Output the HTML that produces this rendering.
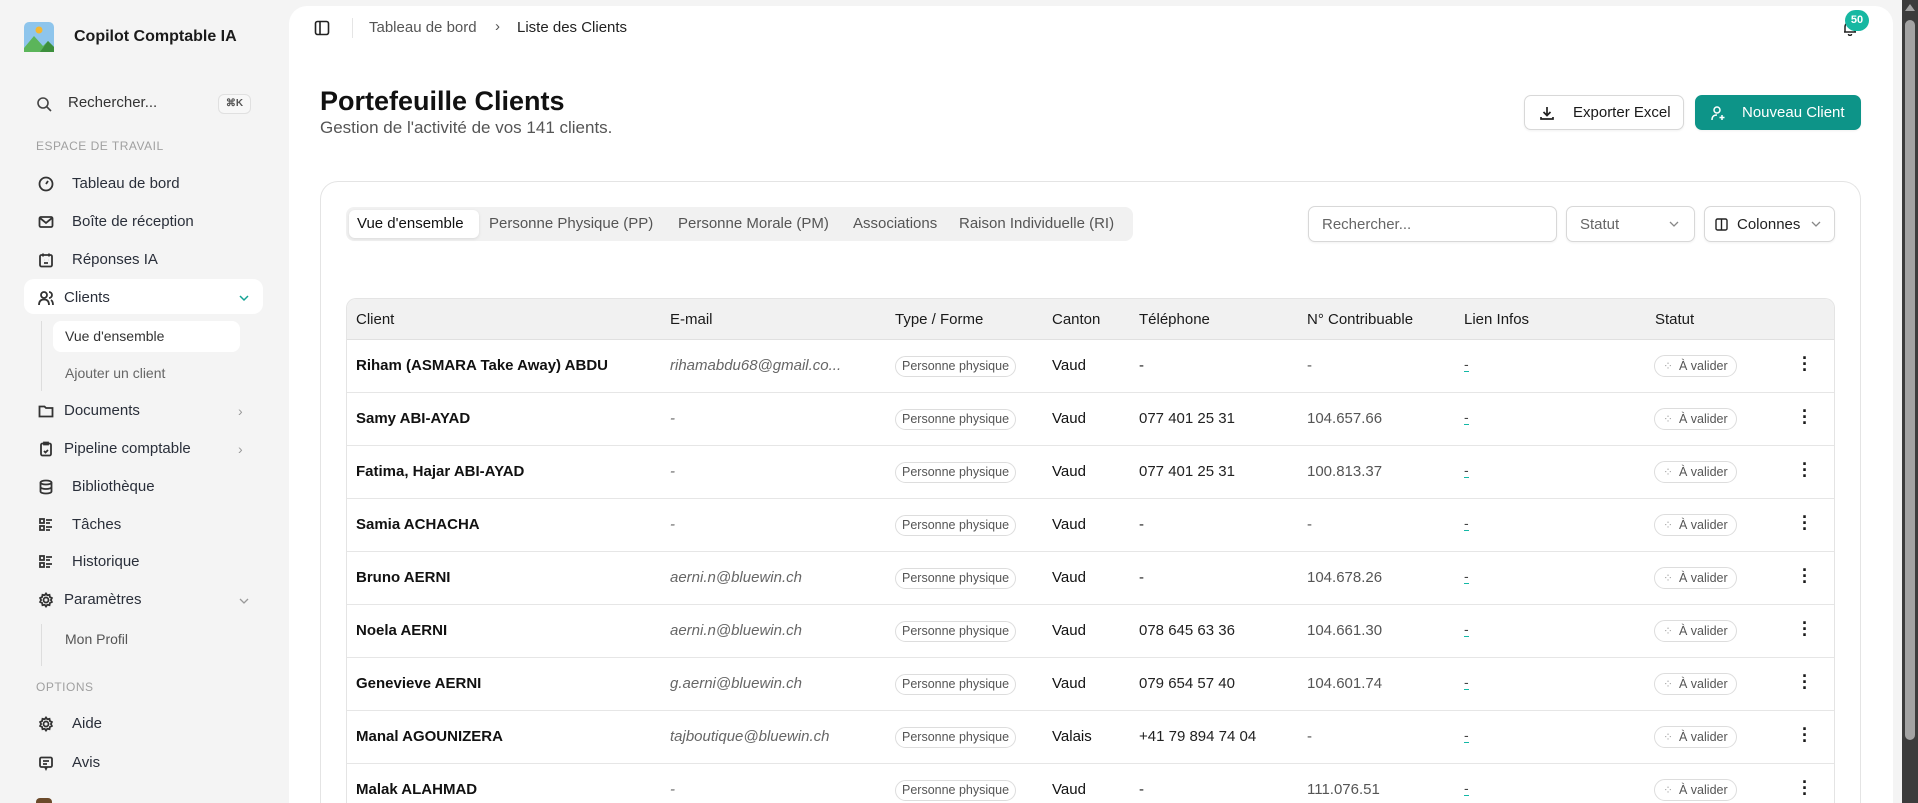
<!DOCTYPE html>
<html style="width:1918px;height:803px;overflow:hidden"><head><meta charset="utf-8"><style>
*{box-sizing:border-box;margin:0;padding:0}
body{width:1918px;height:803px;overflow:hidden;background:#f4f4f4;font-family:"Liberation Sans",sans-serif;color:#1a1a1a;position:relative}
#wrap{position:absolute;left:0;top:0;width:1918px;height:803px;overflow:hidden}
.a{position:absolute;white-space:nowrap}
.nav{position:absolute;left:38px;font-size:15px;color:#2a2f3a;display:flex;align-items:center}
.nav svg{width:16px;height:16px;margin-right:10px;stroke:#333;fill:none;stroke-width:1.8}
.nav.i svg{margin-right:18px}
.sec{position:absolute;left:36px;font-size:12px;letter-spacing:.5px;color:#a0a0a0}
.main{position:absolute;left:289px;top:6px;width:1604px;height:797px;background:#fff;border-radius:18px 18px 0 0}
.card{position:absolute;left:320px;top:181px;width:1541px;height:622px;border:1px solid #e4e4e4;border-bottom:none;border-radius:18px 18px 0 0;background:#fff}
.btn{position:absolute;border:1px solid #d8d8d8;border-radius:7px;background:#fff;font-size:15px;display:flex;align-items:center;box-shadow:0 1px 2px rgba(0,0,0,.06)}
.tbl{position:absolute;left:346px;top:298px;width:1489px;height:505px;border:1px solid #e4e4e4;border-bottom:none;border-radius:10px 10px 0 0;overflow:hidden}
.th{position:absolute;top:0;height:41px;width:100%;background:#f1f1f1;border-bottom:1px solid #e0e0e0}
.c{position:absolute;font-size:15px;white-space:nowrap}
.row{position:absolute;left:0;width:100%;height:53px;border-bottom:1px solid #e6e6e6}
.badge{position:absolute;left:548px;top:16px;height:21px;padding:0 6px;border:1px solid #ddd;border-radius:11px;font-size:12.5px;color:#555;line-height:19px}
.st{position:absolute;left:1307px;top:15px;height:22px;padding:0 8px 0 24px;border:1px solid #ddd;border-radius:11px;font-size:12.5px;color:#555;line-height:20px}
.st:before{content:"⁘";position:absolute;left:8px;color:#aaa;font-size:12px}
.lk{position:absolute;left:1117px;top:17px;font-size:14px;color:#444;border-bottom:1px solid #14b8a6;line-height:14px}
.dots{position:absolute;left:1455px;top:15px;font-size:18px;font-weight:bold;line-height:6px;width:4px}
</style></head><body><div id="wrap">
<svg class="a" style="left:24px;top:22px" width="30" height="30" viewBox="0 0 30 30"><rect width="30" height="30" rx="5" fill="#8ec5ec"/><circle cx="15" cy="8" r="3.5" fill="#f5b731"/><path d="M0 26 L10 14 L19 24 L24 19 L30 25 V30 H0Z" fill="#5bb55a"/><path d="M16 30 L24 19 L30 25 V30Z" fill="#3d8f3d"/></svg>
<div class="a" style="left:74px;top:28px;font-size:16px;font-weight:bold;color:#1b1b1b">Copilot Comptable IA</div>
<svg class="a" style="left:36px;top:96px" width="16" height="16" viewBox="0 0 16 16" fill="none" stroke="#444" stroke-width="1.6"><circle cx="7" cy="7" r="5"/><path d="M11 11l4 4"/></svg>
<div class="a" style="left:68px;top:94px;font-size:15px;color:#333">Rechercher...</div>
<div class="a" style="left:218px;top:94px;width:33px;height:20px;border:1px solid #e0e0e0;border-radius:6px;font-size:10px;font-weight:bold;color:#555;text-align:center;line-height:18px;background:#f7f7f7">⌘K</div>
<div class="sec" style="top:139px">ESPACE DE TRAVAIL</div>
<div class="a" style="left:24px;top:279px;width:239px;height:35px;background:#fff;border-radius:10px"></div>
<div class="a" style="left:41px;top:321px;width:1px;height:70px;background:#ddd"></div>
<div class="a" style="left:53px;top:321px;width:187px;height:31px;background:#fff;border-radius:8px"></div>
<div class="a" style="left:41px;top:624px;width:1px;height:42px;background:#ddd"></div>
<div class="nav i" style="top:175px"><svg viewBox="0 0 16 16"><circle cx="8" cy="8" r="6.5"/><path d="M8 8l2-3"/></svg>Tableau de bord</div>
<div class="nav i" style="top:213px"><svg viewBox="0 0 16 16"><rect x="1.5" y="3" width="13" height="10" rx="1.5"/><path d="M2 4l6 5 6-5"/></svg>Boîte de réception</div>
<div class="nav i" style="top:251px"><svg viewBox="0 0 16 16"><rect x="2" y="3" width="12" height="11.5" rx="1.5"/><path d="M5 1.5v3M11 1.5v3M6 8h.1M10 8h.1M6 11h4"/></svg>Réponses IA</div>
<div class="nav" style="top:289px"><svg viewBox="0 0 16 16"><circle cx="6" cy="5" r="3"/><path d="M1 15c0-4 2-5.5 5-5.5s5 1.5 5 5.5M11 2a3 3 0 010 6M13 10c1.5 1 2 2.5 2 5"/></svg>Clients</div>
<svg class="a" style="left:238px;top:292px" width="12" height="12" viewBox="0 0 12 12" fill="none" stroke="#14a394" stroke-width="1.5"><path d="M2 4l4 4 4-4"/></svg>
<div class="a" style="left:65px;top:328px;font-size:14px;color:#333">Vue d'ensemble</div>
<div class="a" style="left:65px;top:365px;font-size:14px;color:#666">Ajouter un client</div>
<div class="nav" style="top:402px"><svg viewBox="0 0 16 16"><path d="M1.5 3.5h5l1.5 1.5h6.5v8.5h-13z"/></svg>Documents</div>
<div class="nav" style="top:440px"><svg viewBox="0 0 16 16"><rect x="3" y="2.5" width="10" height="12" rx="1.5"/><path d="M6 1.5h4v2H6zM6 10l1.5 1.5L10 9"/></svg>Pipeline comptable</div>
<div class="a" style="left:238px;top:403px;color:#999;font-size:14px">›</div>
<div class="a" style="left:238px;top:441px;color:#999;font-size:14px">›</div>
<div class="nav i" style="top:478px"><svg viewBox="0 0 16 16"><ellipse cx="8" cy="3.5" rx="5.5" ry="2"/><path d="M2.5 3.5v9c0 1.1 2.5 2 5.5 2s5.5-.9 5.5-2v-9M2.5 8c0 1.1 2.5 2 5.5 2s5.5-.9 5.5-2"/></svg>Bibliothèque</div>
<div class="nav i" style="top:516px"><svg viewBox="0 0 16 16"><rect x="2" y="2" width="4" height="4"/><rect x="2" y="9" width="4" height="4"/><path d="M8 3h6M8 6h4M8 10h6M8 13h4"/></svg>Tâches</div>
<div class="nav i" style="top:553px"><svg viewBox="0 0 16 16"><rect x="2" y="2" width="4" height="4"/><rect x="2" y="9" width="4" height="4"/><path d="M8 3h6M8 6h4M8 10h6M8 13h4"/></svg>Historique</div>
<div class="nav" style="top:591px"><svg viewBox="0 0 16 16"><circle cx="8" cy="8" r="2.5"/><path d="M8 1.5l1.3 1.8 2.2-.5.4 2.2 2 1-1 2 1 2-2 1-.4 2.2-2.2-.5L8 14.5l-1.3-1.8-2.2.5-.4-2.2-2-1 1-2-1-2 2-1 .4-2.2 2.2.5z"/></svg>Paramètres</div>
<svg class="a" style="left:238px;top:595px" width="12" height="12" viewBox="0 0 12 12" fill="none" stroke="#999" stroke-width="1.3"><path d="M2 4l4 4 4-4"/></svg>
<div class="a" style="left:65px;top:631px;font-size:14px;color:#555">Mon Profil</div>
<div class="sec" style="top:680px">OPTIONS</div>
<div class="nav i" style="top:715px"><svg viewBox="0 0 16 16"><circle cx="8" cy="8" r="2.5"/><path d="M8 1.5l1.3 1.8 2.2-.5.4 2.2 2 1-1 2 1 2-2 1-.4 2.2-2.2-.5L8 14.5l-1.3-1.8-2.2.5-.4-2.2-2-1 1-2-1-2 2-1 .4-2.2 2.2.5z"/></svg>Aide</div>
<div class="nav i" style="top:754px"><svg viewBox="0 0 16 16"><rect x="2" y="2.5" width="12" height="9.5" rx="1.5"/><path d="M5 6h6M5 9h4M7 12l1 2 1-2"/></svg>Avis</div>
<div class="a" style="left:36px;top:798px;width:16px;height:5px;background:#6b4a2a;border-radius:4px 4px 0 0"></div>

<div class="main"></div>
<svg class="a" style="left:314px;top:20px" width="16" height="16" viewBox="0 0 16 16" fill="none" stroke="#222" stroke-width="1.6"><rect x="1.5" y="1.5" width="13" height="13" rx="2"/><path d="M6 1.5v13"/></svg>
<div class="a" style="left:352px;top:18px;width:1px;height:20px;background:#e5e5e5"></div>
<div class="a" style="left:369px;top:19px;font-size:15px;color:#555">Tableau de bord</div>
<div class="a" style="left:495px;top:18px;font-size:15px;color:#555">›</div>
<div class="a" style="left:517px;top:19px;font-size:15px;color:#222">Liste des Clients</div>
<svg class="a" style="left:1843px;top:20px" width="14" height="16" viewBox="0 0 14 16" fill="none" stroke="#222" stroke-width="1.5"><path d="M2 12V7a5 5 0 0110 0v5zM1 12h12M5.5 14a1.5 1.5 0 003 0"/></svg>
<div class="a" style="left:1845px;top:10px;width:24px;height:21px;border-radius:11px;background:#17b8a2;color:#fff;font-size:11px;font-weight:bold;text-align:center;line-height:21px">50</div>

<div class="a" style="left:320px;top:86px;font-size:27px;font-weight:bold;color:#111">Portefeuille Clients</div>
<div class="a" style="left:320px;top:118px;font-size:17px;color:#555">Gestion de l'activité de vos 141 clients.</div>

<div class="btn" style="left:1524px;top:95px;width:160px;height:35px"><svg style="margin:0 18px 0 14px" width="16" height="16" viewBox="0 0 16 16" fill="none" stroke="#222" stroke-width="1.7"><path d="M8 2v8M4.5 7L8 10.5 11.5 7M2 12v2h12v-2"/></svg>Exporter Excel</div>
<div class="btn" style="left:1695px;top:95px;width:166px;height:35px;background:#0d9488;border-color:#0d9488;color:#fff"><svg style="margin:0 16px 0 14px" width="16" height="16" viewBox="0 0 16 16" fill="none" stroke="#fff" stroke-width="1.5"><circle cx="7" cy="5" r="3"/><path d="M2 15c0-4 2-5 5-5M12 10v5M9.5 12.5h5"/></svg>Nouveau Client</div>

<div class="card"></div>
<div class="a" style="left:346px;top:207px;width:787px;height:34px;background:#f1f1f1;border-radius:8px"></div>
<div class="a" style="left:349px;top:210px;width:130px;height:28px;background:#fff;border-radius:6px;box-shadow:0 1px 3px rgba(0,0,0,.1)"></div>
<div class="a" style="left:357px;top:215px;font-size:15px;color:#111">Vue d'ensemble</div>
<div class="a" style="left:489px;top:215px;font-size:15px;color:#555">Personne Physique (PP)</div>
<div class="a" style="left:678px;top:215px;font-size:15px;color:#555">Personne Morale (PM)</div>
<div class="a" style="left:853px;top:215px;font-size:15px;color:#555">Associations</div>
<div class="a" style="left:959px;top:215px;font-size:15px;color:#555">Raison Individuelle (RI)</div>

<div class="btn" style="left:1308px;top:206px;width:249px;height:36px;color:#666;padding-left:13px">Rechercher...</div>
<div class="btn" style="left:1566px;top:206px;width:129px;height:36px;color:#666;padding-left:13px">Statut<svg style="position:absolute;right:14px" width="12" height="12" viewBox="0 0 12 12" fill="none" stroke="#888" stroke-width="1.3"><path d="M2 4l4 4 4-4"/></svg></div>
<div class="btn" style="left:1704px;top:206px;width:131px;height:36px;color:#222;padding-left:10px"><svg style="margin-right:9px" width="13" height="13" viewBox="0 0 13 13" fill="none" stroke="#222" stroke-width="1.4"><rect x="1" y="1" width="11" height="11" rx="1.5"/><path d="M6.5 1v11"/></svg>Colonnes<svg style="position:absolute;right:12px" width="12" height="12" viewBox="0 0 12 12" fill="none" stroke="#888" stroke-width="1.3"><path d="M2 4l4 4 4-4"/></svg></div>

<div class="tbl">
<div class="th">
<div class="c" style="left:9px;top:12px">Client</div>
<div class="c" style="left:323px;top:12px">E-mail</div>
<div class="c" style="left:548px;top:12px">Type / Forme</div>
<div class="c" style="left:705px;top:12px">Canton</div>
<div class="c" style="left:792px;top:12px">Téléphone</div>
<div class="c" style="left:960px;top:12px">N° Contribuable</div>
<div class="c" style="left:1117px;top:12px">Lien Infos</div>
<div class="c" style="left:1308px;top:12px">Statut</div>
</div>
<div id="rows"></div>
</div>

<div class="a" style="left:1902px;top:0;width:16px;height:803px;background:#3c3c3c"></div>
<div class="a" style="left:1905px;top:20px;width:10px;height:720px;background:#a3a3a3;border-radius:5px"></div>
<div class="a" style="left:1905px;top:4px;width:0;height:0;border-left:5px solid transparent;border-right:5px solid transparent;border-bottom:7px solid #a3a3a3"></div>
</div>
<script>
var d=[["Riham (ASMARA Take Away) ABDU","rihamabdu68@gmail.co...","Vaud","-","-"],
["Samy ABI-AYAD","-","Vaud","077 401 25 31","104.657.66"],
["Fatima, Hajar ABI-AYAD","-","Vaud","077 401 25 31","100.813.37"],
["Samia ACHACHA","-","Vaud","-","-"],
["Bruno AERNI","aerni.n@bluewin.ch","Vaud","-","104.678.26"],
["Noela AERNI","aerni.n@bluewin.ch","Vaud","078 645 63 36","104.661.30"],
["Genevieve AERNI","g.aerni@bluewin.ch","Vaud","079 654 57 40","104.601.74"],
["Manal AGOUNIZERA","tajboutique@bluewin.ch","Valais","+41 79 894 74 04","-"],
["Malak ALAHMAD","-","Vaud","-","111.076.51"]];
var h="";d.forEach(function(r,i){var t=41+i*53;
h+='<div class="row" style="top:'+t+'px">'+
'<div class="c" style="left:9px;top:17px;font-weight:bold;color:#111">'+r[0]+'</div>'+
'<div class="c" style="left:323px;top:17px;font-style:italic;color:#666">'+r[1]+'</div>'+
'<div class="badge">Personne physique</div>'+
'<div class="c" style="left:705px;top:17px;color:#111">'+r[2]+'</div>'+
'<div class="c" style="left:792px;top:17px;color:#222">'+r[3]+'</div>'+
'<div class="c" style="left:960px;top:17px;color:#555">'+r[4]+'</div>'+
'<div class="lk">-</div><div class="st">À valider</div>'+
'<div class="dots">·<br>·<br>·</div></div>';});
document.getElementById("rows").innerHTML=h;
</script>
</body></html>
